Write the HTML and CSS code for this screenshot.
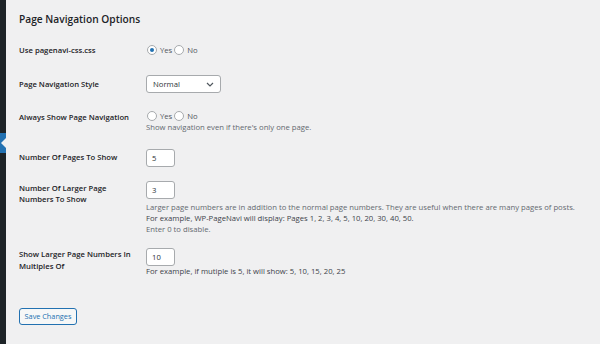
FILE: index.html
```html
<!DOCTYPE html>
<html>
<head>
<meta charset="utf-8">
<link rel="stylesheet" href="styles.css">
</head>
<body>
<div class="layout">
  <aside class="sidebar"><div class="active"><span class="notch"></span></div></aside>
  <main class="content">
    <h2 class="title">Page Navigation Options</h2>

    <div class="row r1">
      <div class="label">Use pagenavi-css.css</div>
      <div class="field">
        <div class="radios">
          <span class="radio checked"></span><span class="rlabel">Yes</span>
          <span class="radio"></span><span class="rlabel">No</span>
        </div>
      </div>
    </div>

    <div class="row r2">
      <div class="label">Page Navigation Style</div>
      <div class="field">
        <div class="select"><span>Normal</span>
          <svg class="chev" width="8" height="5" viewBox="0 0 8 5"><path d="M1 1 L4 4 L7 1" fill="none" stroke="#50575e" stroke-width="1.2"/></svg>
        </div>
      </div>
    </div>

    <div class="row r3">
      <div class="label">Always Show Page Navigation</div>
      <div class="field">
        <div class="radios">
          <span class="radio"></span><span class="rlabel">Yes</span>
          <span class="radio"></span><span class="rlabel">No</span>
        </div>
        <p class="desc">Show navigation even if there's only one page.</p>
      </div>
    </div>

    <div class="row r4">
      <div class="label">Number Of Pages To Show</div>
      <div class="field"><div class="input">5</div></div>
    </div>

    <div class="row r5">
      <div class="label">Number Of Larger Page<br>Numbers To Show</div>
      <div class="field">
        <div class="input">3</div>
        <p class="desc">Larger page numbers are in addition to the normal page numbers. They are useful when there are many pages of posts.</p>
        <p class="desc dark">For example, WP-PageNavi will display: Pages 1, 2, 3, 4, 5, 10, 20, 30, 40, 50.</p>
        <p class="desc">Enter 0 to disable.</p>
      </div>
    </div>

    <div class="row r6">
      <div class="label">Show Larger Page Numbers In<br>Multiples Of</div>
      <div class="field">
        <div class="input">10</div>
        <p class="desc dark">For example, if mutiple is 5, it will show: 5, 10, 15, 20, 25</p>
      </div>
    </div>

    <div class="submit"><button class="btn">Save Changes</button></div>
  </main>
</div>
</body>
</html>
```

FILE: styles.css
```css
html, body {
  margin: 0;
  padding: 0;
  background: #f0f0f1;
  height: 100%;
}
body {
  font-family: "Open Sans", "Noto Sans", sans-serif;
  color: #1d2327;
  overflow: hidden;
}
.layout {
  display: flex;
  height: 344px;
}
.sidebar {
  width: 6px;
  flex: 0 0 6px;
  background: #1d2327;
  padding-top: 133px;
  box-sizing: border-box;
}
.active {
  height: 20px;
  background: #2271b1;
  position: relative;
}
.notch {
  position: absolute;
  right: 0;
  top: 5px;
  width: 0;
  height: 0;
  border-top: 5px solid transparent;
  border-bottom: 5px solid transparent;
  border-right: 5px solid #f0f0f1;
}
.content {
  flex: 1;
  padding-left: 13px;
  padding-top: 12px;
}
.title {
  margin: 0;
  font-size: 10.2px;
  line-height: 14px;
  font-weight: 600;
  color: #1d2327;
}
.row {
  display: flex;
  font-size: 7.7px;
}
.label {
  width: 127px;
  flex: 0 0 127px;
  font-weight: 600;
  line-height: 12px;
  color: #1d2327;
}
.field {
  display: flex;
  flex-direction: column;
  align-items: flex-start;
}
.radios {
  display: flex;
  align-items: center;
  height: 12px;
}
.radio {
  width: 8px;
  height: 8px;
  border: 1px solid #a7aaad;
  border-radius: 50%;
  background: #fff;
  box-sizing: content-box;
  position: relative;
  margin-left: 1px;
}
.radio.checked::after {
  content: "";
  position: absolute;
  left: 2px;
  top: 2px;
  width: 4px;
  height: 4px;
  border-radius: 50%;
  background: #2271b1;
}
.rlabel {
  margin-left: 3px;
  margin-right: 1px;
  color: #50575e;
}
.select {
  width: 75px;
  height: 18px;
  box-sizing: border-box;
  border: 1px solid #a7aaad;
  border-radius: 3px;
  background: #fff;
  display: flex;
  align-items: center;
  justify-content: space-between;
  padding: 0 6px 0 6px;
  color: #2c3338;
}
.input {
  width: 29px;
  height: 18px;
  box-sizing: border-box;
  border: 1px solid #a7aaad;
  border-radius: 3px;
  background: #fff;
  padding-left: 5px;
  line-height: 16px;
  color: #2c3338;
}
.desc {
  margin: 0;
  line-height: 11px;
  color: #646970;
  white-space: nowrap;
}
.desc.dark {
  color: #3c434a;
}
.r1 { margin-top: 18px; }
.r2 { margin-top: 19px; }
.r2 .label { padding-top: 3px; }
.r3 { margin-top: 17px; }
.r3 .label { padding-top: 1px; }
.r4 { margin-top: 16px; }
.r4 .label { padding-top: 2px; }
.r5 { margin-top: 14px; }
.r5 .label { line-height: 11px; padding-top: 2px; }
.r5 .desc:first-of-type { margin-top: 3px; }
.r6 { margin-top: 13px; }
.r6 .label { line-height: 12px; }
.r6 .desc { margin-top: 0; }
.submit { margin-top: 25px; }
.btn {
  font-family: "Open Sans", "Noto Sans", sans-serif;
  font-size: 7.3px;
  width: 58px;
  height: 17px;
  padding: 0;
  border: 1px solid #2271b1;
  border-radius: 3px;
  background: #f6f7f7;
  color: #2271b1;
}
```
